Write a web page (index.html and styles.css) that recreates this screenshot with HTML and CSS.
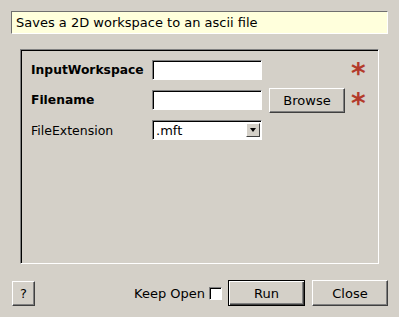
FILE: index.html
```html
<!DOCTYPE html>
<html lang="en">
<head>
    <meta charset="UTF-8">
    <title>SaveAscii</title>
    <link rel="stylesheet" href="styles.css">
</head>
<body>
    <div class="dialog">
        <div class="tip">Saves a 2D workspace to an ascii file</div>

        <div class="panel">
            <div class="row">
                <label class="name bold">InputWorkspace</label>
                <input type="text" class="field">
                <span class="spacer"></span>
                <span class="star">*</span>
            </div>
            <div class="row">
                <label class="name bold">Filename</label>
                <input type="text" class="field">
                <button class="btn browse">Browse</button>
                <span class="star">*</span>
            </div>
            <div class="row">
                <label class="name">FileExtension</label>
                <div class="combo">
                    <span>.mft</span>
                    <span class="arrow"></span>
                </div>
            </div>
        </div>

        <div class="footer">
            <button class="btn help">?</button>
            <span class="grow"></span>
            <label class="keep">Keep Open <span class="check"></span></label>
            <button class="btn run">Run</button>
            <button class="btn close">Close</button>
        </div>
    </div>
</body>
</html>
```

FILE: styles.css
```css
body {
    margin: 0;
    background: #d4d0c8;
    font-family: "DejaVu Sans", sans-serif;
    font-size: 13px;
    color: #000;
}
.dialog {
    width: 399px;
    height: 317px;
    padding: 11px 11px 0 11px;
    box-sizing: border-box;
}
.tip {
    height: 23px;
    box-sizing: border-box;
    background: #ffffdc;
    border-top: 1px solid #6f6f6f;
    border-left: 1px solid #6f6f6f;
    border-right: 1px solid #fff;
    border-bottom: 1px solid #fff;
    padding: 3px 0 0 4px;
    line-height: 16px;
}
.panel {
    margin: 15px 9px 0 9px;
    height: 215px;
    box-sizing: border-box;
    border-top: 1px solid #808080;
    border-left: 1px solid #808080;
    border-right: 1px solid #fff;
    border-bottom: 1px solid #fff;
    box-shadow: inset 1px 1px 0 #000;
    padding: 5px 0 0 10px;
}
.row {
    display: flex;
    align-items: center;
    height: 30px;
}
.name {
    width: 121px;
    font-size: 12.5px;
}
.bold {
    font-weight: bold;
    font-size: 12.3px;
}
.field, .combo {
    width: 110px;
    height: 20px;
    box-sizing: border-box;
    margin: 0;
    padding: 0;
    background: #fff;
    border-top: 1px solid #808080;
    border-left: 1px solid #808080;
    border-right: 1px solid #fff;
    border-bottom: 1px solid #fff;
    box-shadow: inset 1px 1px 0 #000;
}
.combo {
    display: flex;
    align-items: center;
    justify-content: space-between;
    padding: 0 1px 0 3px;
}
.arrow {
    width: 14px;
    height: 14px;
    box-sizing: border-box;
    background: #d4d0c8;
    border-top: 1px solid #fff;
    border-left: 1px solid #fff;
    border-right: 1px solid #404040;
    border-bottom: 1px solid #404040;
    position: relative;
}
.arrow::after {
    content: "";
    position: absolute;
    left: 3px;
    top: 4px;
    border-left: 3px solid transparent;
    border-right: 3px solid transparent;
    border-top: 4px solid #000;
}
.spacer {
    width: 83px;
}
.btn {
    font-family: "DejaVu Sans", sans-serif;
    font-size: 13px;
    background: #d4d0c8;
    color: #000;
    margin: 0;
    padding: 0;
    box-sizing: border-box;
    border-top: 1px solid #fff;
    border-left: 1px solid #fff;
    border-right: 1px solid #404040;
    border-bottom: 1px solid #404040;
    box-shadow: inset -1px -1px 0 #808080;
}
.browse {
    width: 76px;
    height: 25px;
    margin-left: 7px;
}
.star {
    color: #b33a2b;
    font-size: 28px;
    font-weight: bold;
    line-height: 20px;
    height: 16px;
    margin-left: 6px;
    padding-top: 4px;
}
.footer {
    display: flex;
    align-items: center;
    margin-top: 16px;
    padding-left: 1px;
}
.help {
    width: 23px;
    height: 25px;
}
.grow {
    flex: 1;
}
.keep {
    display: flex;
    align-items: center;
}
.check {
    display: inline-block;
    width: 13px;
    height: 13px;
    box-sizing: border-box;
    background: #fff;
    margin-left: 4px;
    border-top: 1px solid #808080;
    border-left: 1px solid #808080;
    border-right: 1px solid #fff;
    border-bottom: 1px solid #fff;
    box-shadow: inset 1px 1px 0 #000;
}
.run {
    width: 77px;
    height: 26px;
    margin-left: 6px;
    border: 1px solid #000;
    box-shadow: inset 1px 1px 0 #fff, inset -1px -1px 0 #404040, inset -2px -2px 0 #808080;
}
.close {
    width: 76px;
    height: 26px;
    margin-left: 7px;
}
```
